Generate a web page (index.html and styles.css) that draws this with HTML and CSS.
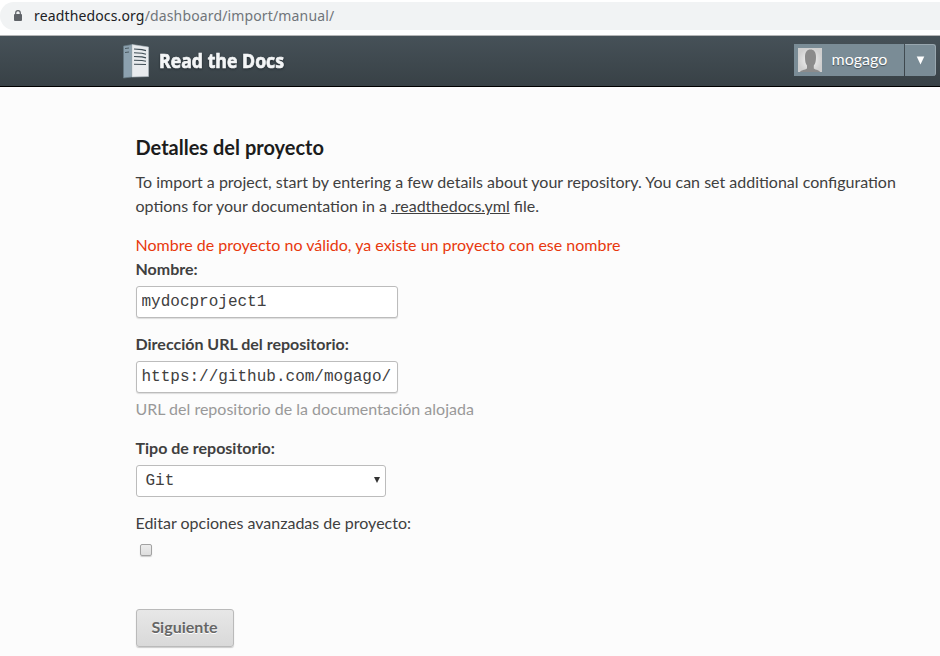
FILE: index.html
```html
<!DOCTYPE html>
<html lang="es">
<head>
<meta charset="utf-8">
<title>Read the Docs</title>
<link rel="stylesheet" href="styles.css">
</head>
<body>
<div class="browser-bar">
  <div class="address">
    <svg class="lock" width="10" height="12" viewBox="0 0 10 12"><rect x="1" y="4" width="8" height="7" rx="1" fill="#5f6368"/><path d="M2.7 4.5V3a2.3 2.3 0 0 1 4.6 0v1.5" fill="none" stroke="#5f6368" stroke-width="1.2"/></svg>
    <span class="url"><span class="host">readthedocs.org</span>/dashboard/import/manual/</span>
  </div>
</div>
<header class="header">
  <a class="brand">
    <svg width="27" height="35" viewBox="0 0 27 35">
      <path d="M.5 2 9 .5V33L.5 34z" fill="#8ca1af" stroke="#657883" stroke-width=".7"/>
      <path d="M9 .5 25.500 3v29.500L9 33z" fill="#e8ebee" stroke="#b6c0c6" stroke-width=".6"/>
      <path d="M2 4.500l4-.5M2 8.500l4-.5" stroke="#4a5961" stroke-width="1"/>
      <path d="M11 5l8 .6 4 1M11 8.700l8 .6 4 1M11 12.500l8 .4 4 1M11 16.300l8 .2 4 .8M11 20.200l12 .3" fill="none" stroke="#3e4c54" stroke-width="1.100"/>
    </svg>
    <svg class="wordmark" width="130" height="30"><text x="0" y="20.500" textLength="125" lengthAdjust="spacingAndGlyphs">Read the Docs</text></svg>
  </a>
  <div class="account">
    <div class="user">
      <svg width="24" height="24" viewBox="0 0 24 24"><defs><radialGradient id="g"><stop offset="0" stop-color="#f5f5f5"/><stop offset="1" stop-color="#cfcfcf"/></radialGradient></defs><rect width="24" height="24" fill="url(#g)"/><path d="M2 24c1-2 5-2 7-3.500v-3C7.500 16 7 13 7 9c0-5 2-7.500 5.500-7.500S18 4 18 9c0 4-.7 7-2.200 8.500v3c2 1.500 5.500 1.500 6.200 3.500z" fill="#8b8b8b"/></svg>
      <span>mogago</span>
    </div>
    <div class="toggle"><svg width="9" height="9" viewBox="0 0 9 9"><path d="M.7.500h7.600L4.500 8.500z" fill="#fff"/></svg></div>
  </div>
</header>
<main class="content">
  <h3>Detalles del proyecto</h3>
  <p class="intro">To import a project, start by entering a few details about your repository. You can set additional configuration options for your documentation in a <a class="link">.readthedocs.yml</a> file.</p>
  <form>
    <div class="error">Nombre de proyecto no válido, ya existe un proyecto con ese nombre</div>
    <div class="field">
      <label class="bold">Nombre:</label>
      <input class="text" type="text" value="mydocproject1">
    </div>
    <div class="field">
      <label class="bold">Dirección URL del repositorio:</label>
      <input class="text" type="text" value="https://github.com/mogago/">
      <div class="help">URL del repositorio de la documentación alojada</div>
    </div>
    <div class="field">
      <label class="bold">Tipo de repositorio:</label>
      <div class="select"><span>Git</span><svg width="6" height="6" viewBox="0 0 6 6"><path d="M0 0h6L3 6z" fill="#333"/></svg></div>
    </div>
    <div class="field">
      <label>Editar opciones avanzadas de proyecto:</label>
      <input class="check" type="checkbox">
    </div>
    <button class="submit" type="button">Siguiente</button>
  </form>
</main>
</body>
</html>
```
FILE: styles.css
```css
* { box-sizing: border-box; }
body {
  margin: 0;
  height: 656px;
  overflow: hidden;
  background: #fcfcfc;
  color: #404040;
  font: 16px/24px Lato, sans-serif;
}
.browser-bar {
  height: 36px;
  padding-top: 2px;
  background: #fff;
  border-bottom: 1px solid #b5b6b7;
}
.address {
  display: flex;
  align-items: center;
  height: 28px;
  padding-left: 13px;
  background: #f1f3f4;
  border-radius: 14px 0 0 14px;
}
.url {
  margin-left: 11px;
  color: #70757a;
  font: 14px/20px "Noto Sans", sans-serif;
  letter-spacing: 0.145px;
}
.host { color: #202124; }
.header {
  display: flex;
  justify-content: space-between;
  height: 51px;
  padding: 8px 4px 0 123px;
  background: linear-gradient(#465158, #384146);
  border-bottom: 1px solid #000;
}
.brand { display: flex; height: 35px; }
.wordmark {
  margin: 3px 0 0 9px;
  overflow: visible;
  fill: #f4f6f7;
  stroke: #f4f6f7;
  stroke-width: 0.7px;
  font: bold 20px "Open Sans", sans-serif;
  filter: drop-shadow(0 1px 1px #222b30);
}
.account { display: flex; gap: 1px; height: 32px; }
.user {
  display: flex;
  align-items: center;
  width: 110px;
  padding-left: 4px;
  background: #7a8c96;
  color: #fff;
  text-shadow: 0 1px 1px #465158;
}
.user span { margin: -2px 0 0 9.6px; }
.toggle {
  display: flex;
  align-items: center;
  justify-content: center;
  width: 31px;
  background: #7a8c96;
  border-top: 1px solid #98a6ae;
  border-right: 1px solid #98a6ae;
  border-radius: 0 3px 3px 0;
}
.content { padding: 48px 40px 0 135.5px; }
h3 {
  margin: 0 0 11px;
  color: #1c1c1c;
  font-size: 20px;
  line-height: 24px;
}
.intro { margin: 0 0 15px; }
.link { text-decoration: underline; }
.error { color: #e8380d; }
.field { margin-bottom: 15px; }
label { display: block; }
.bold { font-weight: bold; }
.text {
  display: block;
  width: 262px;
  height: 32px;
  margin: 5px 0 -1px;
  padding: 0 5px;
  border: 1px solid #bcbcbc;
  border-radius: 3px;
  box-shadow: 0 1px 1px #ddd;
  background: #fff;
  color: #404040;
  font: 16px "Liberation Mono", monospace;
}
.help { margin-top: 5px; color: #999; }
.select {
  display: flex;
  align-items: center;
  justify-content: space-between;
  width: 250px;
  height: 32px;
  margin: 5px 0 -1px;
  padding: 0 5px 0 9px;
  border: 1px solid #bcbcbc;
  border-radius: 3px;
  background: #fff;
  font-family: "Liberation Mono", monospace;
}
.select svg { margin-bottom: 2px; }
.check {
  display: block;
  appearance: none;
  width: 12px;
  height: 12px;
  margin: 9px 0 -1px 4.5px;
  border: 1px solid #a2a2a2;
  border-radius: 2px;
  background: linear-gradient(#ededed, #dedede);
  box-shadow: 0 1px 1px #ccc;
}
.submit {
  display: block;
  width: 98px;
  height: 38px;
  margin-top: 54px;
  padding: 0 0 4px;
  border: 1px solid #bababa;
  border-radius: 3px;
  background: linear-gradient(#e7e7e7, #d9d9d9);
  box-shadow: 0 1px 1px #ccc;
  color: #666;
  font: bold 16px Lato, sans-serif;
  text-shadow: 0 1px 0 #fff;
}
```
